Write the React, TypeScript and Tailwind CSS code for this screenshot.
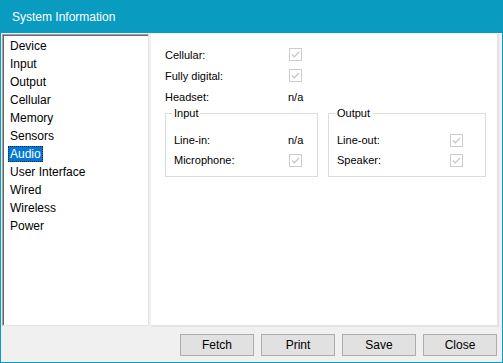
import React from "react";

const items = [
  "Device",
  "Input",
  "Output",
  "Cellular",
  "Memory",
  "Sensors",
  "Audio",
  "User Interface",
  "Wired",
  "Wireless",
  "Power",
];

const Check: React.FC = () => (
  <svg width="13" height="13" viewBox="0 0 13 13" className="block">
    <rect x="0.5" y="0.5" width="12" height="12" fill="#ffffff" stroke="#cccccc" />
    <path d="M3 6.5 L5.3 8.8 L10 4" fill="none" stroke="#c4c4c4" strokeWidth="1.2" />
  </svg>
);

const Row: React.FC<{ label: string; labelW: string; children: React.ReactNode; h?: string }> = ({
  label,
  labelW,
  children,
  h = "h-[21px]",
}) => (
  <div className={`flex items-center ${h}`}>
    <div className={labelW}>{label}</div>
    <div>{children}</div>
  </div>
);

const Group: React.FC<{ title: string; w: string; children: React.ReactNode }> = ({ title, w, children }) => (
  <div className={`relative ${w} mt-[6px] h-[64px] border border-[#dcdcdc] pl-2 pt-[16px]`}>
    <span className="absolute -top-[8px] left-[6px] bg-white px-[2px] leading-[14px]">{title}</span>
    {children}
  </div>
);

const App: React.FC = () => {
  return (
    <div
      className="w-[503px] h-[363px] flex flex-col bg-[#f0f0f0] border-x border-b border-[#0a9bc0] text-black overflow-hidden"
      style={{ fontFamily: '"Liberation Sans", Arial, sans-serif' }}
    >
      {/* title bar */}
      <div className="h-[34px] -mx-px bg-[#0a9bc0] flex items-center pl-[12px] text-white text-[12px]">
        System Information
      </div>

      <div className="flex flex-1 pt-[1px] pl-[1px] pr-[2px]">
        {/* list */}
        <div className="w-[147px] h-[292px] border border-t-[#a0a0a0] border-l-[#a0a0a0] border-r-[#e3e3e3] border-b-[#e3e3e3]">
          <div className="h-full bg-white border-t border-l border-[#696969] pl-[4px] pt-[1px] text-[12px]">
            {items.map((it) =>
              it === "Audio" ? (
                <div key={it} className="h-[18px] flex items-center">
                  <span className="bg-[#0078d7] text-white px-[2px] h-[16px] leading-[16px] outline outline-1 outline-dotted outline-[#222] -outline-offset-1">
                    {it}
                  </span>
                </div>
              ) : (
                <div key={it} className="h-[18px] flex items-center pl-[2px]">
                  {it}
                </div>
              )
            )}
          </div>
        </div>

        {/* detail panel */}
        <div className="ml-[2px] w-[348px] h-[293px] bg-white border-r-2 border-b-2 border-[#e3e3e3] pl-[14px] pt-[10px] text-[11px]">
          <Row label="Cellular:" labelW="w-[124px]">
            <Check />
          </Row>
          <Row label="Fully digital:" labelW="w-[124px]">
            <Check />
          </Row>
          <Row label="Headset:" labelW="w-[123px]">
            n/a
          </Row>
          <div className="flex gap-[10px]">
            <Group title="Input" w="w-[153px]">
              <Row label="Line-in:" labelW="w-[114px]" h="h-[20px]">
                n/a
              </Row>
              <Row label="Microphone:" labelW="w-[115px]" h="h-[20px]">
                <Check />
              </Row>
            </Group>
            <Group title="Output" w="w-[158px]">
              <Row label="Line-out:" labelW="w-[113px]" h="h-[20px]">
                <Check />
              </Row>
              <Row label="Speaker:" labelW="w-[113px]" h="h-[20px]">
                <Check />
              </Row>
            </Group>
          </div>
        </div>
      </div>

      {/* buttons */}
      <div className="h-[35px] flex items-start justify-end gap-[7px] pr-[5px] pt-[7px] text-[12px]">
        {["Fetch", "Print", "Save", "Close"].map((b) => (
          <button
            key={b}
            className="w-[74px] h-[22px] bg-[#e1e1e1] border border-[#adadad] flex items-center justify-center"
          >
            {b}
          </button>
        ))}
      </div>
    </div>
  );
};

export default App;
